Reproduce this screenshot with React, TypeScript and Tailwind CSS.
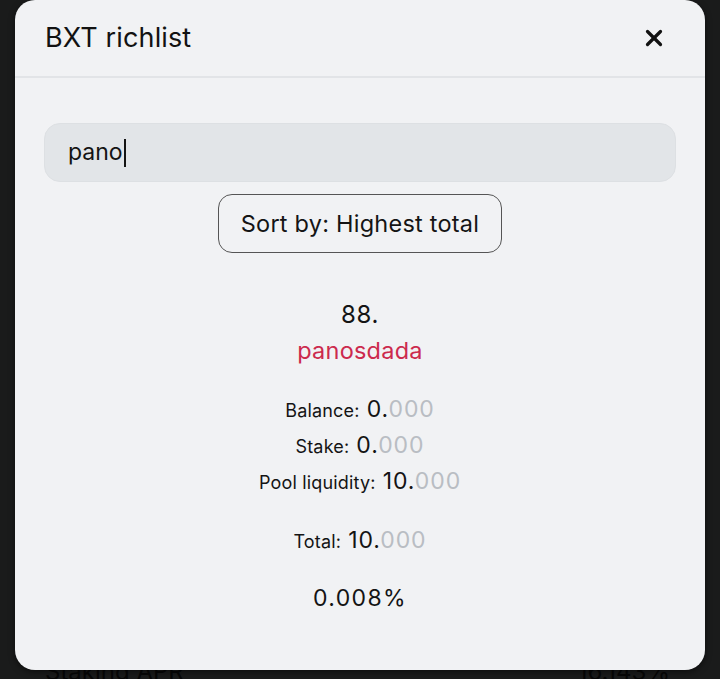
import { X } from 'lucide-react';

function Amount({ label, whole, decimals }: { label: string; whole: string; decimals: string }) {
  return (
    <div className="h-[36px] flex items-baseline justify-center gap-[7px]">
      <span className="text-[18px] tracking-[0.01em] text-[#141414]">{label}</span>
      <span className="text-[23px] tracking-[0.04em] text-[#141414]">
        {whole}.<span className="text-[#b9bdc3]">{decimals}</span>
      </span>
    </div>
  );
}

export default function App() {
  return (
    <div className="relative w-[720px] h-[679px] overflow-hidden bg-[#1a1b1b] font-['Inter',sans-serif]">
      {/* Page behind the dim overlay */}
      <div className="h-full flex flex-col justify-end">
        <div className="flex items-center justify-between px-[45px] pr-[50px] h-[30px] mb-[-8px] text-[24px] text-[#070707]">
          <span>Staking APR</span>
          <span>16.143%</span>
        </div>
      </div>

      {/* Modal */}
      <div className="absolute left-[15px] top-0 w-[690px] h-[670px] rounded-[20px] bg-[#f1f2f4] shadow-[0_2px_6px_rgba(0,0,0,0.5)] flex flex-col">
        <div className="h-[78px] flex items-center justify-between pl-[30px] pr-[38px] border-b-2 border-[#e2e4e7]">
          <h2 className="text-[27px] text-[#121212] tracking-[0.005em]">BXT richlist</h2>
          <X size={26} strokeWidth={3} className="text-[#121212]" />
        </div>

        <div className="flex flex-col items-center px-[29px] pt-[45px]">
          <div className="w-full h-[59px] rounded-[16px] bg-[#e2e5e8] border border-[#dde0e3] flex items-center pl-[23px] text-[23px] text-[#141414]">
            <span>pano</span>
            <span className="w-[2px] h-[28px] bg-[#141414] ml-[1px]" />
          </div>

          <button className="mt-[12px] w-[284px] h-[59px] rounded-[14px] border border-[#555] text-[23.5px] text-[#141414] tracking-[0.01em]">
            Sort by: Highest total
          </button>

          <div className="mt-[44px] h-[36px] flex items-center text-[24px] text-[#141414] tracking-[0.03em]">88.</div>
          <div className="h-[36px] flex items-center text-[23.5px] text-[#cc2a4d] tracking-[0.01em]">panosdada</div>

          <div className="mt-[23px] flex flex-col">
            <Amount label="Balance:" whole="0" decimals="000" />
            <Amount label="Stake:" whole="0" decimals="000" />
            <Amount label="Pool liquidity:" whole="10" decimals="000" />
          </div>

          <div className="mt-[23px]">
            <Amount label="Total:" whole="10" decimals="000" />
          </div>

          <div className="mt-[21px] h-[36px] flex items-center text-[23px] text-[#141414] tracking-[0.06em]">0.008%</div>
        </div>
      </div>
    </div>
  );
}
